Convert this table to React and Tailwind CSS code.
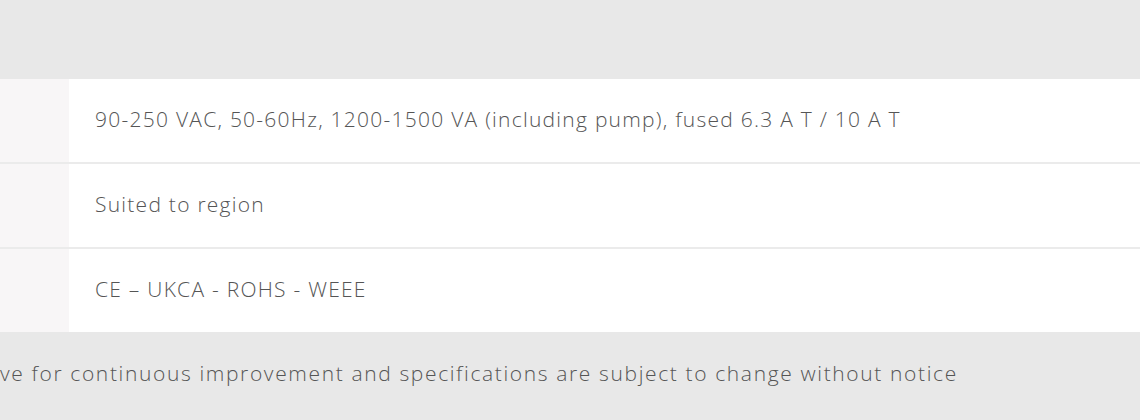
const rows = [
  '90-250 VAC, 50-60Hz, 1200-1500 VA (including pump), fused 6.3 A T / 10 A T',
  'Suited to region',
  'CE – UKCA - ROHS - WEEE',
];

export default function App() {
  return (
    <div
      className="w-[1140px] h-[420px] bg-[#e8e8e8] overflow-hidden text-[#555555] font-light"
      style={{ fontFamily: '"Open Sans", "DejaVu Sans", sans-serif' }}
    >
      <div className="h-[79px]" />

      {/* Spec table */}
      <div className="flex flex-col gap-[2px] bg-[#ebebeb]">
        {rows.map((text) => (
          <div key={text} className="flex h-[83px]">
            <div className="w-[69px] shrink-0 bg-[#f8f6f7]" />
            <div className="flex-1 bg-white flex items-center pl-[26px] pb-[2px] text-[21px] tracking-[1.25px]">
              {text}
            </div>
          </div>
        ))}
      </div>

      {/* Footnote */}
      <div className="h-[88px] flex items-center">
        <p className="text-[21px] whitespace-nowrap tracking-[1.63px] pb-[4px]">
          ve for continuous improvement and specifications are subject to change without notice
        </p>
      </div>
    </div>
  );
}
